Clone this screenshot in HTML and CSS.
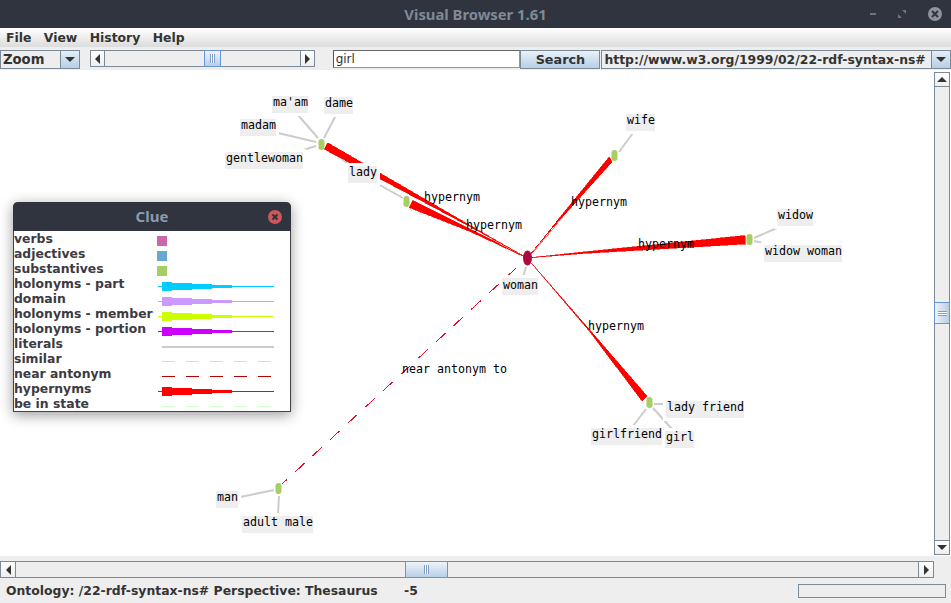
FILE: index.html
```html
<!DOCTYPE html>
<html lang="en">
<head>
  <meta charset="UTF-8">
  <title>Visual Browser 1.61</title>
  <link rel="stylesheet" href="styles.css">
</head>
<body>

  <svg class="defs" width="0" height="0">
    <symbol id="taper" viewBox="0 0 116 15">
      <rect x="0" y="9" width="116" height="1"/>
      <rect x="4" y="5" width="10" height="9"/>
      <rect x="14" y="6" width="20" height="7"/>
      <rect x="34" y="7" width="20" height="5"/>
      <rect x="54" y="8" width="20" height="3"/>
    </symbol>
    <symbol id="dashes" viewBox="0 0 116 15">
      <rect x="4" y="9" width="13" height="1"/>
      <rect x="28" y="9" width="13" height="1"/>
      <rect x="52" y="9" width="13" height="1"/>
      <rect x="76" y="9" width="13" height="1"/>
      <rect x="100" y="9" width="13" height="1"/>
    </symbol>
  </svg>

  <div class="app">
    <header class="titlebar">
      <span class="titlebar-name">Visual Browser 1.61</span>
      <div class="wm-buttons">
        <span class="wm-min"></span>
        <svg class="wm-max" width="8" height="8" viewBox="0 0 8 8"><path d="M4 0h4v4zM0 4l4 4H0z"/></svg>
        <span class="wm-close">
          <svg width="14" height="14" viewBox="0 0 14 14"><path d="M4 4l6 6M10 4l-6 6"/></svg>
        </span>
      </div>
    </header>

    <nav class="menubar">
      <span>File</span>
      <span>View</span>
      <span>History</span>
      <span>Help</span>
    </nav>

    <div class="toolbar">
      <div class="combo combo-zoom">
        <span class="combo-value">Zoom</span>
        <span class="combo-arrow"><i class="tri tri-down"></i></span>
      </div>
      <div class="hbar hbar-zoom">
        <span class="bar-btn"><i class="tri tri-left"></i></span>
        <div class="bar-track"><span class="bar-thumb"><i class="grip-v"></i></span></div>
        <span class="bar-btn"><i class="tri tri-right"></i></span>
      </div>
      <input class="search-box" type="text" value="girl">
      <button class="search-btn">Search</button>
      <div class="combo combo-url">
        <span class="combo-value">http://www.w3.org/1999/02/22-rdf-syntax-ns#</span>
        <span class="combo-arrow"><i class="tri tri-down"></i></span>
      </div>
    </div>

    <main class="workspace">
      <div class="canvas">
        <svg class="graph" width="934" height="486" viewBox="0 70 934 486">
          <g class="edge-literal">
            <path d="M298 115L318 138M335 117L324 138M278 133L316 142M303 150L316 146M330 150L347 163"/>
            <path d="M378 184L403 198"/>
            <path d="M633 133L619 152"/>
            <path d="M777 228L754 238M754 241L764 243"/>
            <path d="M654 404L665 404M646 409L633 426M653 408L672 429"/>
            <path d="M240 497L274 490M279 496L278 514"/>
            <path d="M526 267L523 277"/>
          </g>

          <g class="edge-hypernym">
            <polygon points="327.8,142.8 470.3,225.5 527,258 469.7,226.5 324.2,149.2"/>
            <polygon points="412.7,200.4 472,230 527,258 470,231.5 409.3,207.6"/>
            <polygon points="609.3,156.7 612,162 557.5,222.5 527,258 556.5,221.5"/>
            <polygon points="745,235.5 745.5,244 583,253.5 527,258 583,252"/>
            <polygon points="647,396 642,401 590,332 527,258 590.8,331"/>
          </g>
          <line class="edge-antonym" x1="282" y1="484" x2="527" y2="258"/>

          <ellipse class="hub-root" cx="527.5" cy="258" rx="4.5" ry="7.5"/>
          <rect class="hub" x="318.5" y="139" width="6" height="11" rx="3"/>
          <rect class="hub" x="403.5" y="196" width="6" height="11" rx="3"/>
          <rect class="hub" x="611.5" y="150" width="6" height="11" rx="3"/>
          <rect class="hub" x="746.5" y="234" width="6" height="11" rx="3"/>
          <rect class="hub" x="646.5" y="397" width="6" height="11" rx="3"/>
          <rect class="hub" x="275.5" y="483" width="6" height="11" rx="3"/>

          <g class="node-label">
            <rect x="272" y="96" width="36" height="17"/><text x="273" y="106">ma'am</text>
            <rect x="324" y="97" width="29" height="17"/><text x="325" y="107">dame</text>
            <rect x="240" y="119" width="36" height="17"/><text x="241" y="129">madam</text>
            <rect x="225" y="152" width="78" height="17"/><text x="226" y="162">gentlewoman</text>
            <rect x="348" y="166" width="29" height="17"/><text x="349" y="176">lady</text>
            <rect x="626" y="114" width="29" height="17"/><text x="627" y="124">wife</text>
            <rect x="777" y="209" width="36" height="17"/><text x="778" y="219">widow</text>
            <rect x="764" y="245" width="78" height="17"/><text x="765" y="255">widow woman</text>
            <rect x="502" y="278" width="36" height="17"/><text x="503" y="289">woman</text>
            <rect x="666" y="401" width="78" height="17"/><text x="667" y="411">lady friend</text>
            <rect x="591" y="428" width="71" height="17"/><text x="592" y="438">girlfriend</text>
            <rect x="665" y="431" width="29" height="17"/><text x="666" y="441">girl</text>
            <rect x="216" y="491" width="22" height="17"/><text x="217" y="501">man</text>
            <rect x="242" y="516" width="71" height="17"/><text x="243" y="526">adult male</text>
          </g>

          <g class="edge-label">
            <text x="424" y="201">hypernym</text>
            <text x="466" y="229">hypernym</text>
            <text x="571" y="206">hypernym</text>
            <text x="638" y="248">hypernym</text>
            <text x="588" y="330">hypernym</text>
            <text x="402" y="373">near antonym to</text>
          </g>
        </svg>

        <section class="clue">
          <header class="clue-title">
            <span>Clue</span>
            <span class="clue-close">
              <svg width="14" height="14" viewBox="0 0 14 14"><path d="M4.5 4.5l5 5M9.5 4.5l-5 5"/></svg>
            </span>
          </header>
          <ul class="clue-list">
            <li><span>verbs</span><i class="swatch swatch-verbs"></i></li>
            <li><span>adjectives</span><i class="swatch swatch-adjectives"></i></li>
            <li><span>substantives</span><i class="swatch swatch-substantives"></i></li>
            <li><span>holonyms - part</span><svg class="key key-part"><use href="#taper"/></svg></li>
            <li><span>domain</span><svg class="key key-domain"><use href="#taper"/></svg></li>
            <li><span>holonyms - member</span><svg class="key key-member"><use href="#taper"/></svg></li>
            <li><span>holonyms - portion</span><svg class="key key-portion"><use href="#taper"/></svg></li>
            <li><span>literals</span><i class="key-literal"></i></li>
            <li><span>similar</span><svg class="key key-similar"><use href="#dashes"/></svg></li>
            <li><span>near antonym</span><svg class="key key-antonym"><use href="#dashes"/></svg></li>
            <li><span>hypernyms</span><svg class="key key-hypernym"><use href="#taper"/></svg></li>
            <li><span>be in state</span><svg class="key key-state"><use href="#dashes"/></svg></li>
          </ul>
        </section>
      </div>

      <div class="vbar">
        <span class="bar-btn"><i class="tri tri-up"></i></span>
        <div class="vbar-track"><span class="vbar-thumb"><i class="grip-h"></i></span></div>
        <span class="bar-btn"><i class="tri tri-down"></i></span>
      </div>
    </main>

    <div class="hbar hbar-main">
      <span class="bar-btn"><i class="tri tri-left"></i></span>
      <div class="bar-track"><span class="bar-thumb"><i class="grip-v"></i></span></div>
      <span class="bar-btn"><i class="tri tri-right"></i></span>
    </div>

    <footer class="statusbar">
      <span class="status-text">Ontology: /22-rdf-syntax-ns# Perspective: Thesaurus</span>
      <span class="status-num">-5</span>
      <span class="progress"></span>
    </footer>
  </div>

</body>
</html>
```

FILE: styles.css
```css
* {
  box-sizing: border-box;
}

body {
  margin: 0;
  background: #eeeeee;
  font-family: "DejaVu Sans", sans-serif;
  font-size: 12.4px;
  color: #333;
  overflow: hidden;
}

.defs {
  position: absolute;
}

.app {
  display: flex;
  flex-direction: column;
  width: 951px;
  height: 603px;
}

/* window title */
.titlebar {
  position: relative;
  flex: 0 0 28px;
  display: flex;
  align-items: center;
  justify-content: center;
  background: #2f343f;
  color: #7f8a96;
  font-family: "Noto Sans", sans-serif;
  font-size: 14.8px;
  font-weight: 700;
}

.wm-buttons {
  position: absolute;
  right: 9px;
  top: 7px;
  display: flex;
  align-items: center;
  gap: 22px;
  height: 14px;
}

.wm-min {
  width: 6px;
  height: 2px;
  background: #6e747f;
}

.wm-max {
  fill: #6e747f;
}

.wm-close {
  width: 14px;
  height: 14px;
  border-radius: 50%;
  background: #8f939b;
}

.wm-close svg {
  display: block;
  fill: none;
  stroke: #2f343f;
  stroke-width: 2;
}

/* menu */
.menubar {
  flex: 0 0 19px;
  display: flex;
  align-items: center;
  gap: 12.4px;
  padding-left: 6px;
  background: linear-gradient(to bottom, #ffffff, #dcdcdc);
  font-weight: 700;
}

/* toolbar */
.toolbar {
  flex: 0 0 23px;
  display: flex;
  align-items: flex-start;
  padding-top: 3px;
  background: #eeeeee;
}

.combo {
  display: flex;
  height: 19px;
  border: 1px solid #7a8a99;
  font-weight: 700;
}

.combo-zoom {
  width: 80px;
  font-size: 13.2px;
}

.combo-url {
  width: 350px;
  margin-left: 1px;
}

.combo-value {
  flex: 1;
  padding-left: 2px;
  line-height: 17px;
  white-space: nowrap;
  overflow: hidden;
}

.combo-arrow {
  flex: 0 0 19px;
  display: flex;
  align-items: center;
  justify-content: center;
  border-left: 1px solid #7a8a99;
  background: linear-gradient(to bottom, #e4edf6, #b8cfe5);
}

.hbar {
  display: flex;
  height: 17px;
}

.hbar-zoom {
  width: 225px;
  margin-left: 10px;
}

.hbar-main {
  flex: 0 0 17px;
  width: 934px;
  margin-top: 5px;
}

.bar-btn {
  flex: 0 0 15px;
  display: flex;
  align-items: center;
  justify-content: center;
  border: 1px solid #7a8a99;
  background: linear-gradient(to bottom, #ffffff, #eeeeee);
}

.bar-track {
  position: relative;
  flex: 1;
  border-top: 1px solid #7a8a99;
  border-bottom: 1px solid #7a8a99;
  background: #eeeeee;
}

.bar-thumb {
  position: absolute;
  top: -1px;
  bottom: -1px;
  left: 99px;
  width: 17px;
  display: flex;
  align-items: center;
  justify-content: center;
  border: 1px solid #6a93d4;
  background: linear-gradient(to bottom, #eef3f9, #b8cfe5);
}

.hbar-main .bar-btn {
  flex-basis: 16px;
}

.hbar-main .bar-thumb {
  left: 389px;
  width: 43px;
}

.grip-v {
  width: 5px;
  height: 9px;
  background: repeating-linear-gradient(to right, #7e9cc4 0, #7e9cc4 1px, #ffffff 1px, #ffffff 2px);
}

.grip-h {
  width: 9px;
  height: 5px;
  background: repeating-linear-gradient(to bottom, #7e9cc4 0, #7e9cc4 1px, #ffffff 1px, #ffffff 2px);
}

.search-box {
  width: 188px;
  height: 18px;
  margin-left: 18px;
  padding: 0 1px 0 2px;
  border: 1px solid #8a99a8;
  border-left-color: #555;
  border-top-color: #666;
  background: #ffffff;
  color: #333;
  font-family: "DejaVu Sans", sans-serif;
  font-size: 12px;
}

.search-btn {
  width: 80px;
  height: 19px;
  padding: 0;
  border: 1px solid #7a8a99;
  background: linear-gradient(to bottom, #eaf1f8, #b8cfe5);
  color: #333;
  font-family: "DejaVu Sans", sans-serif;
  font-size: 12.8px;
  font-weight: 700;
}

/* triangles */
.tri {
  display: block;
  width: 0;
  height: 0;
  border-style: solid;
  border-color: transparent;
}

.tri-down {
  border-width: 5px 5px 0;
  border-top-color: #333;
}

.tri-up {
  border-width: 0 5px 5px;
  border-bottom-color: #333;
}

.tri-left {
  border-width: 5px 5px 5px 0;
  border-right-color: #333;
}

.tri-right {
  border-width: 5px 0 5px 5px;
  border-left-color: #333;
}

/* canvas */
.workspace {
  flex: 0 0 486px;
  display: flex;
  background: #ffffff;
}

.canvas {
  position: relative;
  flex: 0 0 934px;
}

.graph {
  display: block;
}

.edge-literal path {
  fill: none;
  stroke: #cccccc;
  stroke-width: 2;
}

.edge-hypernym polygon {
  fill: #ff0000;
  stroke: #ff0000;
  stroke-width: 0.6;
  shape-rendering: crispEdges;
}

.edge-antonym {
  stroke: #e0102a;
  stroke-width: 1;
  stroke-dasharray: 13 11;
  stroke-dashoffset: 6.5;
  shape-rendering: crispEdges;
}

.hub {
  fill: #a8cd63;
}

.hub-root {
  fill: #b00a3c;
}

.node-label rect {
  fill: #eeeeee;
  stroke: #ffffff;
  stroke-width: 6;
  paint-order: stroke;
}

.node-label text,
.edge-label text {
  font-family: "DejaVu Sans Mono", monospace;
  font-size: 11.65px;
  fill: #000000;
}

/* legend window */
.clue {
  position: absolute;
  left: 13px;
  top: 132px;
  width: 278px;
  height: 210px;
  border: 1px solid #444;
  border-top: 0;
  border-radius: 5px 5px 0 0;
  background: #ffffff;
  box-shadow: 0 3px 14px rgba(0, 0, 0, 0.4);
}

.clue-title {
  position: relative;
  display: flex;
  align-items: center;
  justify-content: center;
  height: 29px;
  margin: 0 -1px;
  padding-bottom: 2px;
  border-radius: 5px 5px 0 0;
  background: #2f343f;
  color: #8a9bb0;
  font-family: "Noto Sans", sans-serif;
  font-size: 15px;
  font-weight: 700;
}

.clue-close {
  position: absolute;
  right: 9px;
  top: 8px;
  width: 14px;
  height: 14px;
  border-radius: 50%;
  background: #cc575d;
}

.clue-close svg {
  display: block;
  fill: none;
  stroke: #2f343f;
  stroke-width: 2;
}

.clue-list {
  margin: 0;
  padding: 1px 0 0;
  list-style: none;
}

.clue-list li {
  display: grid;
  grid-template-columns: 144px 1fr;
  height: 15px;
  line-height: 14px;
  font-weight: 700;
  color: #3d3a42;
  white-space: nowrap;
}

.swatch {
  display: block;
  width: 10px;
  height: 10px;
  margin: 4px 0 0 -1px;
}

.swatch-verbs {
  background: #c967aa;
}

.swatch-adjectives {
  background: #67a9cf;
}

.swatch-substantives {
  background: #a8cd63;
}

.key {
  display: block;
  width: 116px;
  height: 15px;
}

.key-part { fill: #00ccff; }
.key-domain { fill: #cc99ff; }
.key-member { fill: #ccff00; }
.key-portion { fill: #cc00ff; }
.key-similar { fill: #ffcccc; }
.key-antonym { fill: #bb0000; }
.key-hypernym { fill: #ff0000; }
.key-state { fill: #ccffcc; }

.key-literal {
  display: block;
  width: 112px;
  height: 2px;
  margin: 9px 0 0 4px;
  background: #cccccc;
}

/* right scrollbar */
.vbar {
  display: flex;
  flex-direction: column;
  flex: 0 0 17px;
  padding: 2px 1px 1px 0;
}

.vbar .bar-btn {
  flex: 0 0 15px;
}

.vbar-track {
  position: relative;
  flex: 1;
  border-left: 1px solid #7a8a99;
  border-right: 1px solid #7a8a99;
  background: #eeeeee;
}

.vbar-thumb {
  position: absolute;
  left: -1px;
  right: -1px;
  top: 215px;
  height: 22px;
  display: flex;
  align-items: center;
  justify-content: center;
  border: 1px solid #6a93d4;
  background: linear-gradient(to right, #eef3f9, #b8cfe5);
}

/* status */
.statusbar {
  flex: 1;
  display: flex;
  align-items: center;
  padding-left: 6px;
  font-weight: 700;
}

.status-text {
  width: 398px;
}

.status-num {
  font-weight: 700;
}

.progress {
  width: 148px;
  height: 14px;
  margin-left: auto;
  margin-right: 5px;
  border: 1px solid #7a8a99;
}
```
